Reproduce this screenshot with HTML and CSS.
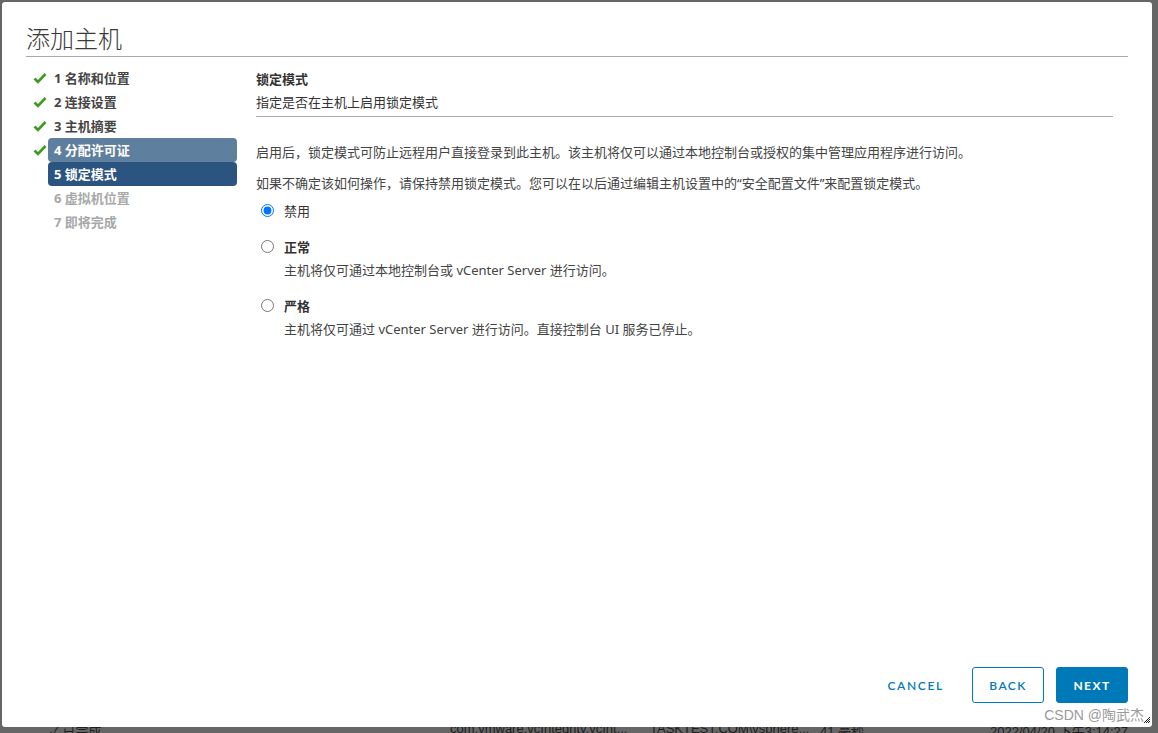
FILE: index.html
```html
<!DOCTYPE html>
<html lang="zh">
<head>
<meta charset="utf-8">
<title>添加主机</title>
<link rel="stylesheet" href="styles.css">
</head>
<body>
<div class="modal">
  <h1 class="title">添加主机</h1>
  <div class="body">
    <ul class="steps">
      <li class="step done"><span class="check"><svg width="14" height="12" viewBox="0 0 14 12"><path d="M1.5 6.5 L5 10 L12.5 2" fill="none" stroke="#3d9b1f" stroke-width="2.6"/></svg></span><span class="label">1 名称和位置</span></li>
      <li class="step done"><span class="check"><svg width="14" height="12" viewBox="0 0 14 12"><path d="M1.5 6.5 L5 10 L12.5 2" fill="none" stroke="#3d9b1f" stroke-width="2.6"/></svg></span><span class="label">2 连接设置</span></li>
      <li class="step done"><span class="check"><svg width="14" height="12" viewBox="0 0 14 12"><path d="M1.5 6.5 L5 10 L12.5 2" fill="none" stroke="#3d9b1f" stroke-width="2.6"/></svg></span><span class="label">3 主机摘要</span></li>
      <li class="step done"><span class="check"><svg width="14" height="12" viewBox="0 0 14 12"><path d="M1.5 6.5 L5 10 L12.5 2" fill="none" stroke="#3d9b1f" stroke-width="2.6"/></svg></span><span class="label prev">4 分配许可证</span></li>
      <li class="step"><span class="check"></span><span class="label current">5 锁定模式</span></li>
      <li class="step"><span class="check"></span><span class="label todo">6 虚拟机位置</span></li>
      <li class="step"><span class="check"></span><span class="label todo">7 即将完成</span></li>
    </ul>
    <div class="content">
      <div class="head">
        <div class="head-title">锁定模式</div>
        <div class="head-sub">指定是否在主机上启用锁定模式</div>
      </div>
      <p class="para first">启用后，锁定模式可防止远程用户直接登录到此主机。该主机将仅可以通过本地控制台或授权的集中管理应用程序进行访问。</p>
      <p class="para">如果不确定该如何操作，请保持禁用锁定模式。您可以在以后通过编辑主机设置中的“安全配置文件”来配置锁定模式。</p>
      <label class="option"><input type="radio" name="mode" checked><span class="opt-label">禁用</span></label>
      <label class="option gap"><input type="radio" name="mode"><span class="opt-label bold">正常</span></label>
      <div class="desc">主机将仅可通过本地控制台或 vCenter Server 进行访问。</div>
      <label class="option gap2"><input type="radio" name="mode"><span class="opt-label bold">严格</span></label>
      <div class="desc">主机将仅可通过 vCenter Server 进行访问。直接控制台 UI 服务已停止。</div>
    </div>
  </div>
  <div class="footer">
    <button class="btn link">CANCEL</button>
    <button class="btn outline">BACK</button>
    <button class="btn primary">NEXT</button>
  </div>
  <div class="watermark">CSDN @陶武杰</div>
  <svg class="grip" width="6" height="6" viewBox="0 0 6 6"><path d="M0 6 L6 0 M2 6 L6 2 M4 6 L6 4" stroke="#222" stroke-width="1"/></svg>
</div>
<div class="behind">
  <span class="b1">✓ 已完成</span>
  <span class="b2">com.vmware.vcIntegrity.vcInt...</span>
  <span class="b3">TASKTEST.COM\vsphere...</span>
  <span class="b4">41 毫秒</span>
  <span class="b5">2022/04/20 下午3:14:27</span>
</div>
</body>
</html>
```

FILE: styles.css
```css
* { box-sizing: border-box; }
html, body { margin: 0; padding: 0; }
body {
  width: 1158px;
  height: 733px;
  overflow: hidden;
  background: #666666;
  font-family: "Noto Sans", "Noto Sans CJK SC", sans-serif;
  color: #333;
  padding: 2px 0 0 2px;
}
.modal {
  position: relative;
  width: 1150px;
  height: 725px;
  background: #fff;
  border-radius: 3px;
  padding: 20px 24px 24px 24px;
  display: flex;
  flex-direction: column;
}
.title {
  margin: 0;
  font-weight: 300;
  font-size: 24px;
  line-height: 32px;
  color: #3a3a3a;
  padding-bottom: 2px;
  border-bottom: 1px solid #a8a8a8;
  font-family: "Noto Sans CJK SC", sans-serif;
}
.body {
  flex: 1;
  display: flex;
  padding-top: 9px;
}
.steps {
  list-style: none;
  margin: 0;
  padding: 0;
  width: 211px;
  flex: none;
}
.step {
  display: flex;
  align-items: center;
  height: 24px;
}
.check {
  width: 22px;
  flex: none;
  display: flex;
  align-items: center;
  padding-left: 7px;
}
.label {
  flex: 1;
  height: 24px;
  line-height: 24px;
  padding-left: 6px;
  font-size: 13px;
  font-weight: 700;
  color: #454545;
  border-radius: 4px;
  font-family: "Noto Sans", "Noto Sans CJK SC", sans-serif;
}
.label.prev { background: #5f7f9f; color: #fff; }
.label.current { background: #2b5480; color: #fff; }
.label.todo { color: #a8a8a8; }
.content {
  flex: 1;
  padding-left: 19px;
  padding-right: 15px;
  font-size: 13px;
}
.head {
  border-bottom: 1px solid #a8a8a8;
  padding: 1px 0 3px;
}
.head-title {
  line-height: 24px;
  font-weight: 700;
  color: #333;
}
.head-sub {
  line-height: 22px;
  color: #333;
}
.para {
  margin: 0;
  line-height: 24px;
  margin-top: 7px;
  color: #444;
}
.para.first { margin-top: 23px; }
.option {
  display: flex;
  align-items: center;
  height: 24px;
  margin-top: 3px;
}
.option input {
  margin: 0 10px 0 5px;
  width: 13px;
  height: 13px;
  accent-color: #0075ff;
}
.option.gap { margin-top: 12px; }
.option.gap2 { margin-top: 11px; }
.opt-label { color: #333; }
.opt-label.bold { font-weight: 700; }
.desc {
  line-height: 24px;
  padding-left: 28px;
  color: #444;
}
.footer {
  display: flex;
  justify-content: flex-end;
  align-items: center;
  gap: 12px;
}
.btn {
  height: 36px;
  min-width: 72px;
  padding: 0 12px;
  font-family: "Lato", "Noto Sans", sans-serif;
  font-size: 12px;
  font-weight: 700;
  letter-spacing: 0.12em;
  border-radius: 3px;
  cursor: pointer;
}
.btn.link {
  background: transparent;
  border: 1px solid transparent;
  color: #0079b8;
  font-weight: 600;
  letter-spacing: 0.14em;
  margin-right: 3px;
}
.btn.outline {
  background: #fff;
  border: 1px solid #0079b8;
  color: #0079b8;
  font-weight: 600;
}
.btn.primary {
  background: #0079b8;
  border: 1px solid #0079b8;
  color: #fff;
}
.watermark {
  position: absolute;
  right: 8px;
  bottom: 3px;
  font-size: 14px;
  color: #9a9a9a;
  font-family: "Liberation Sans", "Noto Sans CJK SC", sans-serif;
}
.grip {
  position: absolute;
  right: 2px;
  bottom: 4px;
}
.behind {
  position: relative;
  height: 20px;
  margin-top: -6px;
  font-size: 13px;
  color: #1e1e1e;
  font-family: "Liberation Sans", "Noto Sans CJK SC", sans-serif;
  z-index: -1;
}
.behind span { position: absolute; top: 0; }
.b1 { left: 48px; }
.b2 { left: 448px; }
.b3 { left: 648px; }
.b4 { left: 818px; }
.b5 { left: 988px; }
```
